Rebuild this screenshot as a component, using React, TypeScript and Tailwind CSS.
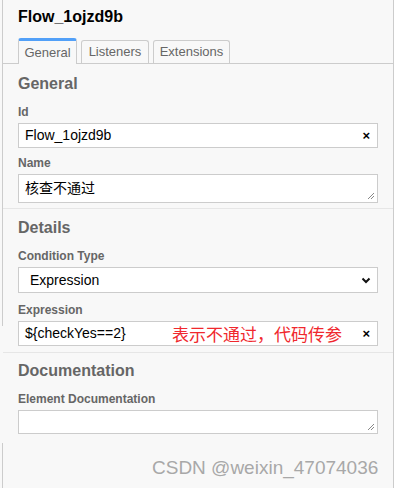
import React from "react"

const font = { fontFamily: '"Liberation Sans", Arial, "Noto Sans CJK SC", sans-serif' }

function ClearX() {
  return <span className="pr-[7px] text-[13px] font-bold leading-none text-black">×</span>
}

function Grip() {
  return (
    <svg className="absolute bottom-[2px] right-[2px]" width="9" height="9" viewBox="0 0 9 9">
      <path d="M8 2 L2 8 M8 5 L5 8" stroke="#888" strokeWidth="1" />
    </svg>
  )
}

function Label({ children }: { children: React.ReactNode }) {
  return <div className="h-[14px] text-[12px] font-bold leading-[14px] text-[#666]">{children}</div>
}

function Heading({ children }: { children: React.ReactNode }) {
  return <div className="h-[20px] text-[16px] font-bold leading-[20px] text-[#666]">{children}</div>
}

function Field({ label, first, children }: { label: string; first?: boolean; children: React.ReactNode }) {
  return (
    <div className={`flex flex-col gap-[4px] ${first ? "mt-[11px]" : "mt-[8px]"}`}>
      <Label>{label}</Label>
      {children}
    </div>
  )
}

export default function App() {
  return (
    <div className="relative flex h-[488px] w-[399px] overflow-hidden bg-white" style={font}>
      <div className="flex w-[3px] flex-col items-end bg-[#f8f8f8]">
        <div className="h-[326px] w-px bg-[#ccc]" />
        <div className="flex-1" />
        <div className="h-[45px] w-px bg-[#ccc]" />
      </div>

      <div className="flex h-full w-[391px] flex-col border-r border-[#ccc] bg-[#f8f8f8]">
        <div className="px-[15px] pt-[7px] text-[16px] font-bold leading-[20px] text-black">Flow_1ojzd9b</div>

        <div className="mt-[11px] flex h-[26px] items-end gap-[4px] border-b border-[#ccc] pl-[15px]">
          <div className="-mb-px flex h-[26px] w-[59px] items-center justify-center rounded-t-[3px] border-x border-t-[3px] border-x-[#ccc] border-t-[#52a0f8] bg-[#f8f8f8] text-[13px] text-[#666]">
            General
          </div>
          <div className="flex h-[23px] w-[68px] items-center justify-center rounded-t-[3px] border-x border-t border-[#ccc] text-[13px] text-[#666]">
            Listeners
          </div>
          <div className="flex h-[23px] w-[77px] items-center justify-center rounded-t-[3px] border-x border-t border-[#ccc] text-[13px] text-[#666]">
            Extensions
          </div>
        </div>

        <div className="border-b border-[#e6e6e6] pb-[5px] pl-[15px] pr-[15px] pt-[10px]">
          <Heading>General</Heading>
          <Field label="Id" first>
            <div className="flex h-[25px] items-center justify-between border border-[#ccc] bg-white pl-[6px] text-[14px] text-black">
              <span>Flow_1ojzd9b</span>
              <ClearX />
            </div>
          </Field>
          <Field label="Name">
            <div className="relative h-[29px] border border-[#ccc] bg-white pl-[6px] pt-[4px] text-[14px] leading-[18px] text-black">
              核查不通过
              <Grip />
            </div>
          </Field>
        </div>

        <div className="border-b border-[#e6e6e6] pb-[6px] pl-[15px] pr-[15px] pt-[9px]">
          <Heading>Details</Heading>
          <Field label="Condition Type" first>
            <div className="flex h-[26px] items-center justify-between border border-[#ccc] bg-white pl-[11px] pr-[6px] text-[14px] text-black">
              <span>Expression</span>
              <svg width="10" height="7" viewBox="0 0 10 7">
                <path d="M1.5 1.5 L5 5 L8.5 1.5" stroke="#111" strokeWidth="2" fill="none" />
              </svg>
            </div>
          </Field>
          <div className="mt-[10px] flex flex-col gap-[4px]">
            <Label>Expression</Label>
            <div className="flex h-[25px] items-center border border-[#ccc] bg-white pl-[6px] text-[14px] text-black">
              <span className="w-[147px]">{"${checkYes==2}"}</span>
              <span
                className="flex-1 text-[17px] leading-none text-[#f0282d]"
                style={{ fontFamily: '"Noto Sans CJK SC", sans-serif' }}
              >
                表示不通过，代码传参
              </span>
              <ClearX />
            </div>
          </div>
        </div>

        <div className="pl-[15px] pr-[15px] pt-[8px]">
          <Heading>Documentation</Heading>
          <Field label="Element Documentation" first>
            <div className="relative h-[24px] border border-[#ccc] bg-white">
              <Grip />
            </div>
          </Field>
        </div>
      </div>

      <div className="absolute left-[152px] top-[456px] text-[19px] leading-[24px] text-[#a8a8a8]">CSDN @weixin_47074036</div>
    </div>
  )
}
